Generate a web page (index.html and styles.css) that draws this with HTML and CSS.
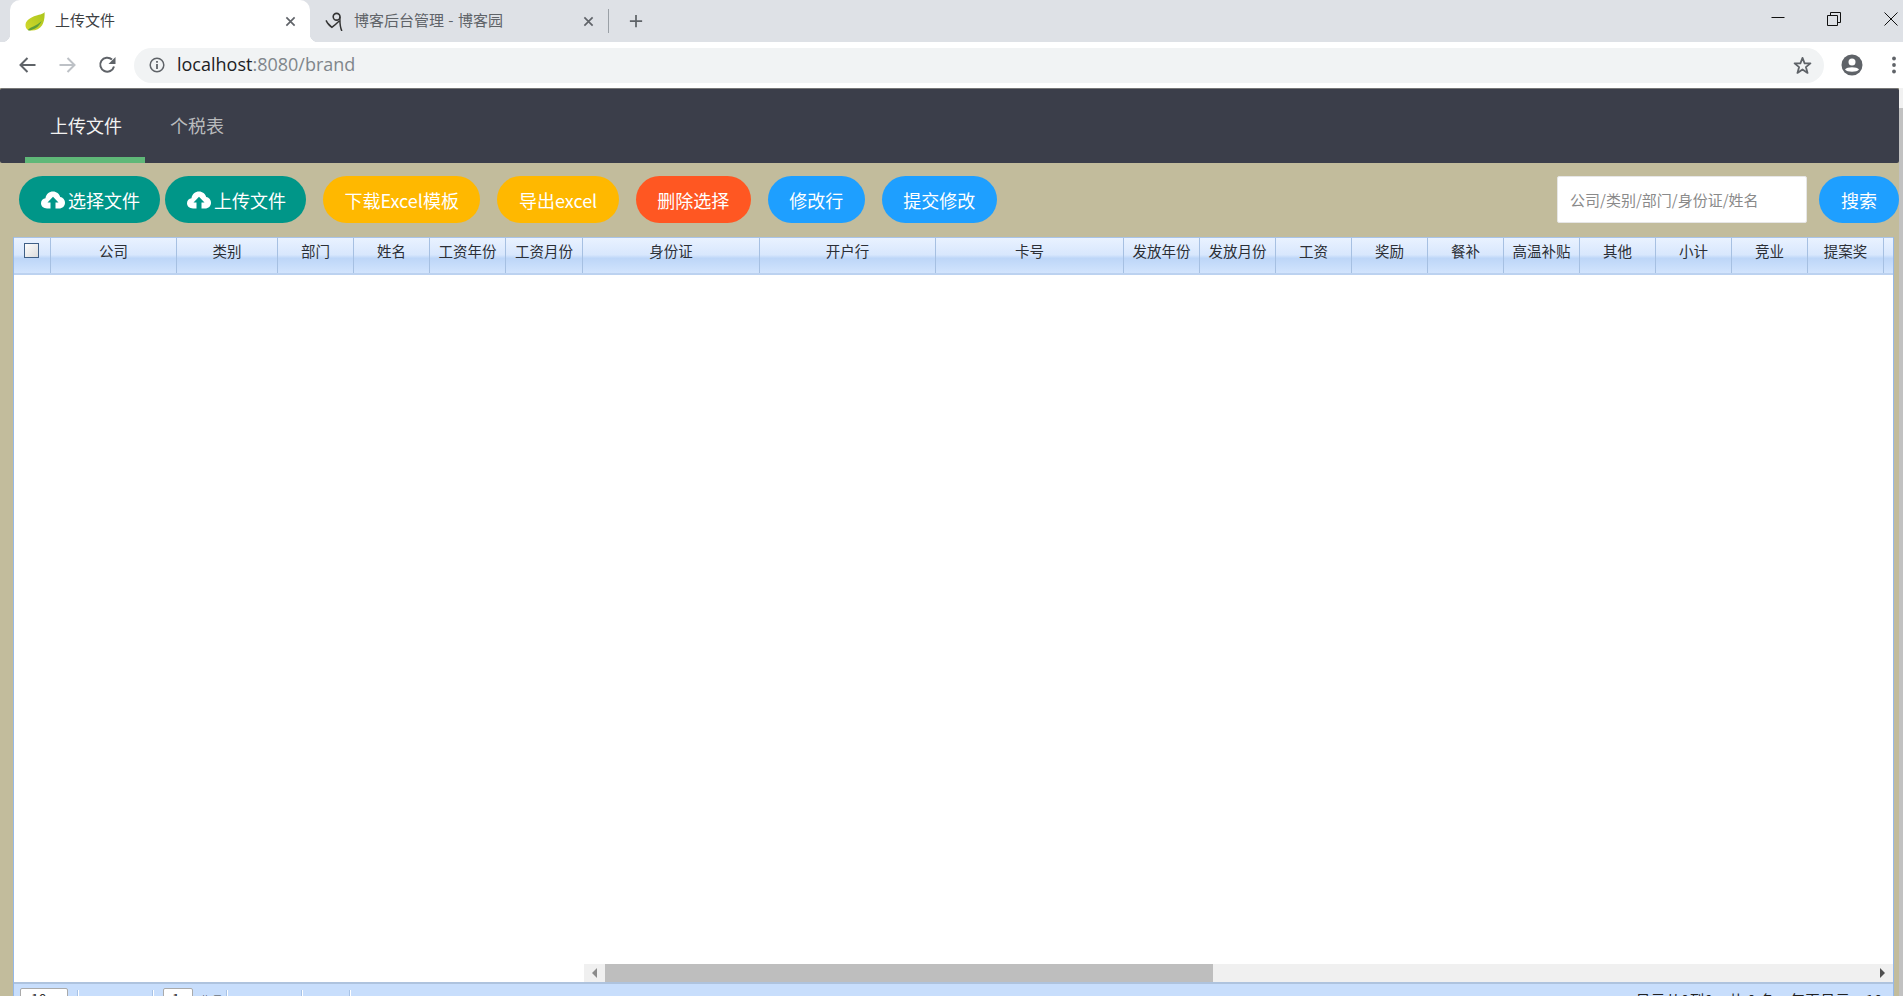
FILE: index.html
```html
<!DOCTYPE html>
<html lang="zh-CN">
<head>
<meta charset="utf-8">
<title>上传文件</title>
<link rel="stylesheet" href="styles.css">
</head>
<body>
<div class="tabstrip">
  <div class="tab tab-active">
    <svg class="favicon" viewBox="0 0 20 20"><defs><linearGradient id="lf" x1="0" y1="1" x2="1" y2="0"><stop offset="0" stop-color="#d3d92c"/><stop offset="1" stop-color="#a9c41c"/></linearGradient></defs><path d="M20 0C18 3 14 2.500 9 4.500C3 7 0 10 0 14C0 16 1 18 2.500 19C8 20.500 14.500 19 17.500 14C19.500 10.500 20.500 5 20 0Z" fill="url(#lf)"/><path d="M2.500 19C6 15 11 15.500 17 9.500C14.500 15.500 9 19 3.500 19.500Z" fill="#5e9e38"/></svg>
    <span class="tab-title">上传文件</span>
    <svg class="tab-x" viewBox="0 0 12 12"><path d="M1.500 1.500L10.500 10.500M10.500 1.500L1.500 10.500" stroke="#5f6368" stroke-width="1.800" fill="none"/></svg>
  </div>
  <div class="tab tab-idle">
    <svg class="favicon" viewBox="0 0 18 18"><circle cx="10.500" cy="4.500" r="3.200" fill="none" stroke="#333" stroke-width="1.500"/><path d="M13.700 4.500C13.500 9 13.500 14 15.500 18M0.500 8C2 11 4 13.500 6 14.500C8 13 11 10.500 13 8.500M6 14.500L1.500 10" fill="none" stroke="#333" stroke-width="1.400"/></svg>
    <span class="tab-title tab-title-idle">博客后台管理 - 博客园</span>
    <svg class="tab-x" viewBox="0 0 12 12"><path d="M1.500 1.500L10.500 10.500M10.500 1.500L1.500 10.500" stroke="#5f6368" stroke-width="1.800" fill="none"/></svg>
  </div>
  <div class="tab-sep"></div>
  <svg class="newtab" viewBox="0 0 16 16"><path d="M8 1V15M1 8H15" stroke="#5f6368" stroke-width="2" fill="none"/></svg>
  <div class="winctl">
    <svg class="wc wc-min" viewBox="0 0 14 14"><path d="M0.500 5.500H13.500" stroke="#111" stroke-width="1" fill="none"/></svg>
    <svg class="wc wc-max" viewBox="0 0 14 14"><path d="M0.500 3.500H10.500V13.500H0.500ZM3.500 3.500V0.500H13.500V10.500H10.500" stroke="#111" stroke-width="1" fill="none"/></svg>
    <svg class="wc wc-close" viewBox="0 0 14 14"><path d="M0.500 0.500L13.500 13.500M13.500 0.500L0.500 13.500" stroke="#111" stroke-width="1" fill="none"/></svg>
  </div>
</div>

<div class="toolbar">
  <svg class="tool tool-back" viewBox="0 0 18 18"><path d="M17 9H2M9 2L2 9L9 16" stroke="#5f6368" stroke-width="2" fill="none"/></svg>
  <svg class="tool tool-fwd" viewBox="0 0 18 18"><path d="M1 9H16M9 2L16 9L9 16" stroke="#bdc1c6" stroke-width="2" fill="none"/></svg>
  <svg class="tool tool-reload" viewBox="0 0 18 18"><path d="M15.500 10.500A7 7 0 1 1 13.500 3.500" stroke="#5f6368" stroke-width="2" fill="none"/><path d="M17 1V8H10Z" fill="#5f6368"/></svg>
  <div class="omnibox">
    <svg class="info" viewBox="0 0 16 16"><circle cx="8" cy="8" r="6.800" stroke="#5f6368" stroke-width="1.500" fill="none"/><path d="M7.100 4H8.900V5.800H7.100ZM7.100 7H8.900V12H7.100Z" fill="#5f6368"/></svg>
    <span class="url"><span class="url-host">localhost</span>:8080/brand</span>
    <svg class="star" viewBox="0 0 18 18"><path d="M9 1.800L11 7H16.500L12.200 10.500L13.800 16L9 12.800L4.200 16L5.800 10.500L1.500 7H7Z" stroke="#5f6368" stroke-width="1.700" fill="none" stroke-linejoin="round"/></svg>
  </div>
  <svg class="avatar" viewBox="0 0 22 22"><circle cx="11" cy="11" r="10.500" fill="#5f6368"/><circle cx="11" cy="8" r="3.500" fill="#fff"/><path d="M4 15.500C6 12.500 16 12.500 18 15.500C16 18.500 6 18.500 4 15.500Z" fill="#fff"/></svg>
  <svg class="dots" viewBox="0 0 6 18"><circle cx="3" cy="2.500" r="1.900" fill="#5f6368"/><circle cx="3" cy="9" r="1.900" fill="#5f6368"/><circle cx="3" cy="15.500" r="1.900" fill="#5f6368"/></svg>
</div>

<div class="viewport">
  <div class="page">
    <nav class="nav">
      <a class="nav-item nav-item-on">上传文件</a>
      <a class="nav-item">个税表</a>
    </nav>
    <div class="actions">
      <button class="btn btn-teal"><svg class="cloud" viewBox="0 0 24 18"><path d="M6 17.500C2.500 17.500 0 15.200 0 12.300C0 9.600 2 7.600 4.500 7.300C5 3.200 8.300 0.500 12 0.500C15.500 0.500 18.300 2.800 19.200 6C21.800 6.400 24 8.600 24 11.700C24 15 21.500 17.500 18 17.500H14.500V11.500H17.500L12 5.800L6.500 11.500H9.500V17.500Z" fill="#fff"/></svg>选择文件</button>
      <button class="btn btn-teal btn-tight"><svg class="cloud" viewBox="0 0 24 18"><path d="M6 17.500C2.500 17.500 0 15.200 0 12.300C0 9.600 2 7.600 4.500 7.300C5 3.200 8.300 0.500 12 0.500C15.500 0.500 18.300 2.800 19.200 6C21.800 6.400 24 8.600 24 11.700C24 15 21.500 17.500 18 17.500H14.500V11.500H17.500L12 5.800L6.500 11.500H9.500V17.500Z" fill="#fff"/></svg>上传文件</button>
      <button class="btn btn-yellow btn-gap">下载Excel模板</button>
      <button class="btn btn-yellow btn-gap">导出excel</button>
      <button class="btn btn-red btn-gap">删除选择</button>
      <button class="btn btn-blue btn-gap">修改行</button>
      <button class="btn btn-blue btn-gap">提交修改</button>
      <div class="search">
        <input class="search-input" type="text" placeholder="公司/类别/部门/身份证/姓名">
        <button class="btn btn-blue btn-search">搜索</button>
      </div>
    </div>
    <section class="grid">
      <div class="grid-head">
        <div class="cell cell-check"><span class="checkbox"></span></div>
        <div class="cell">公司</div>
        <div class="cell">类别</div>
        <div class="cell">部门</div>
        <div class="cell">姓名</div>
        <div class="cell">工资年份</div>
        <div class="cell">工资月份</div>
        <div class="cell">身份证</div>
        <div class="cell">开户行</div>
        <div class="cell">卡号</div>
        <div class="cell">发放年份</div>
        <div class="cell">发放月份</div>
        <div class="cell">工资</div>
        <div class="cell">奖励</div>
        <div class="cell">餐补</div>
        <div class="cell">高温补贴</div>
        <div class="cell">其他</div>
        <div class="cell">小计</div>
        <div class="cell">竞业</div>
        <div class="cell">提案奖</div>
        <div class="cell cell-fill"></div>
      </div>
      <div class="grid-body">
        <div class="hscroll">
          <div class="hs-btn"><span class="arrow-left"></span></div>
          <div class="hs-thumb"></div>
          <div class="hs-rest"></div>
          <div class="hs-btn"><span class="arrow-right"></span></div>
        </div>
      </div>
      <div class="pager">
        <div class="pg-select">10</div>
        <div class="pg-sep pg-sep-a"></div>
        <div class="pg-sep pg-sep-b"></div>
        <div class="pg-input">1</div>
        <div class="pg-text">共0页</div>
        <div class="pg-sep pg-sep-c"></div>
        <div class="pg-sep pg-sep-d"></div>
        <div class="pg-sep pg-sep-e"></div>
        <div class="pg-info">显示从0到0，共 0 条，每页显示：10</div>
      </div>
    </section>
  </div>
  <div class="vscroll"><div class="vthumb"></div></div>
</div>
</body>
</html>
```
FILE: styles.css
```css
* { box-sizing: border-box; }
html, body { margin: 0; height: 996px; overflow: hidden; }
body {
  width: 1903px;
  font-family: "Noto Sans CJK SC", "Open Sans", sans-serif;
  background: #fff;
  display: flex;
  flex-direction: column;
}

/* tab strip */
.tabstrip { height: 42px; flex: none; background: #dee1e6; display: flex; align-items: center; padding-left: 10px; }
.tab { height: 42px; display: flex; align-items: center; position: relative; }
.tab-active { width: 300px; background: #fff; border-radius: 10px 10px 0 0; padding: 0 14px 0 15px; }
.tab-active::before, .tab-active::after { content: ""; position: absolute; bottom: 0; width: 8px; height: 8px; }
.tab-active::before { left: -8px; background: radial-gradient(circle at 0 0, #dee1e6 8px, #fff 8.500px); }
.tab-active::after { right: -8px; background: radial-gradient(circle at 100% 0, #dee1e6 8px, #fff 8.500px); }
.tab-idle { width: 297px; padding: 0 13px 0 15px; }
.favicon { width: 20px; height: 19px; flex: none; }
.tab-title { font-size: 15px; line-height: 20px; color: #3c4043; margin: 0 0 2px 10px; flex: 1; white-space: nowrap; }
.tab-title-idle { color: #5f6368; margin-left: 9px; word-spacing: 1px; }
.tab-x { width: 11px; height: 11px; flex: none; }
.tab-sep { width: 1px; height: 24px; background: #9aa0a6; flex: none; margin-left: 1px; }
.newtab { width: 14px; height: 14px; flex: none; margin-left: 20px; }
.winctl { margin-left: auto; display: flex; align-items: flex-start; height: 42px; padding-top: 12px; }
.wc { width: 14px; height: 14px; display: block; }
.wc-max { margin-left: 42px; }
.wc-close { margin-left: 43px; margin-right: 5px; }

/* address toolbar */
.toolbar { height: 46px; flex: none; background: #fff; display: flex; align-items: center; }
.tool { width: 19px; height: 18px; flex: none; }
.tool-back { margin-left: 18px; }
.tool-fwd { margin-left: 21px; }
.tool-reload { margin-left: 21px; }
.omnibox { width: 1690px; height: 35px; margin-left: 17px; background: #f1f3f4; border-radius: 18px; display: flex; align-items: center; padding: 0 12px 0 15px; }
.info { width: 16px; height: 16px; flex: none; }
.url { font-family: "Open Sans", "Liberation Sans", sans-serif; font-size: 18px; line-height: 24px; color: #80868b; margin: 0 0 2px 12px; flex: 1; }
.url-host { color: #202124; }
.star { width: 19px; height: 19px; flex: none; }
.avatar { width: 22px; height: 22px; margin-left: 17px; flex: none; }
.dots { width: 6px; height: 18px; margin-left: 28px; flex: none; }

/* page */
.viewport { flex: none; height: 908px; display: flex; overflow: hidden; background: #f1f1f1; }
.page { width: 1899px; flex: none; background: #c2bc9c; display: flex; flex-direction: column; }
.vscroll { flex: 1; padding-top: 20px; }
.vthumb { height: 100%; background: #c1c1c1; }

.nav { height: 75px; flex: none; background: #3b3e4a; border-top: 1px solid #777; border-radius: 2px; display: flex; padding-left: 25px; }
.nav-item { height: 74px; padding: 0 25px; font-size: 18px; line-height: 73px; color: #b9bbbd; white-space: nowrap; }
.nav-item-on { color: #f2f2f2; border-bottom: 6px solid #5fb878; width: 120px; }

.actions { height: 74px; flex: none; display: flex; padding: 13px 0 14px 19px; }
.btn { height: 47px; border: 0; border-radius: 24px; color: #fff; font: 18px "Noto Sans CJK SC", sans-serif; padding: 0 21.500px; display: flex; align-items: center; white-space: nowrap; }
.btn-teal { background: #009688; width: 141px; padding: 0 0 0 22px; }
.btn-tight { margin-left: 5px; }
.btn-gap { margin-left: 17px; }
.btn-yellow { background: #ffb800; }
.btn-red { background: #ff5722; }
.btn-blue { background: #1e9fff; }
.cloud { width: 24px; height: 18px; margin-right: 3px; flex: none; }
.search { margin-left: auto; display: flex; gap: 12px; }
.search-input { width: 250px; height: 47px; border: 1px solid #e6e6e6; border-radius: 2px; background: #fff; padding: 0 0 0 12px; font: 15px "Noto Sans CJK SC", sans-serif; }
.search-input::placeholder { color: #8a8a8a; opacity: 1; }
.btn-search { width: 80px; justify-content: center; padding: 0; }

/* data grid */
.grid { width: 1881px; margin-left: 13px; flex: none; border-left: 1px solid #95b8e7; border-right: 1px solid #95b8e7; }
.grid-head {
  height: 38px;
  display: grid;
  grid-template-columns: 37px 126px 101px 76px 76px 76px 77px 177px 176px 188px repeat(10, 76px) 9px;
  border-top: 1px solid #a9c4e8;
  border-bottom: 2px solid #bcd2f0;
  background: linear-gradient(#e9f2ff 0%, #d8e7fd 48%, #bdd6f8 58%, #d2e4fd 100%);
}
.cell { font-size: 14.500px; line-height: 26px; text-align: center; color: #2b2f36; border-right: 1px solid #a6c0e2; white-space: nowrap; overflow: hidden; }
.cell-check { display: flex; justify-content: center; padding-top: 5px; padding-right: 2px; }
.cell-fill { border-right: 0; }
.checkbox { width: 15px; height: 15px; border: 1.500px solid #3f5f86; background: linear-gradient(135deg, #fdfdfd, #dcdcdc); display: block; }
.grid-body { height: 707px; background: #fff; display: flex; flex-direction: column; justify-content: flex-end; }
.hscroll { height: 18px; margin-left: 570px; background: #f0f0f0; display: flex; align-items: stretch; }
.hs-btn { width: 21px; display: flex; align-items: center; justify-content: center; }
.hs-thumb { width: 608px; background: #bebebe; }
.hs-rest { flex: 1; }
.arrow-left { width: 0; height: 0; border: 5px solid transparent; border-left: 0; border-right: 5px solid #8b8b8b; }
.arrow-right { width: 0; height: 0; border: 5px solid transparent; border-right: 0; border-left: 5px solid #505050; }

.pager { height: 40px; background: #c8defc; border-top: 2px solid #aec3de; display: flex; align-items: flex-start; }
.pg-select { margin: 4px 0 0 6px; width: 48px; height: 30px; background: #fff; border: 1px solid #aaa; border-radius: 2px 2px 0 0; font-size: 14px; line-height: 20px; padding-left: 10px; color: #333; }
.pg-sep { width: 2px; height: 20px; margin-top: 6px; border-left: 1px solid #a8c3e6; border-right: 1px solid #fff; flex: none; }
.pg-sep-a { margin-left: 9px; }
.pg-sep-b { margin-left: 73px; }
.pg-input { margin: 4px 0 0 9px; width: 30px; height: 30px; background: #fff; border: 1px solid #aaa; border-radius: 2px 2px 0 0; font-size: 14px; line-height: 20px; padding-left: 8px; color: #333; }
.pg-text { margin: 5px 0 0 8px; width: 24px; font-size: 8px; line-height: 20px; color: #444; overflow: hidden; white-space: nowrap; }
.pg-sep-c { margin-left: 1px; }
.pg-sep-d { margin-left: 73px; }
.pg-sep-e { margin-left: 46px; }
.pg-info { margin: 6px 10px 0 auto; font-size: 14.500px; letter-spacing: 0.600px; line-height: 20px; color: #222; white-space: nowrap; }
```
